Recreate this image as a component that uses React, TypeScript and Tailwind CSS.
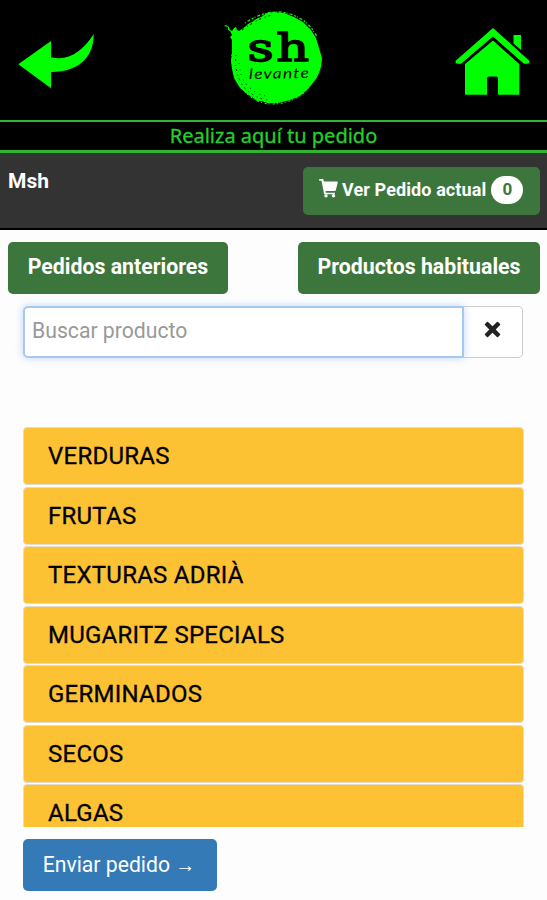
import React, { useState } from 'react';

const categories = [
  'VERDURAS',
  'FRUTAS',
  'TEXTURAS ADRIÀ',
  'MUGARITZ SPECIALS',
  'GERMINADOS',
  'SECOS',
  'ALGAS',
];

const BackArrow = () => (
  <svg viewBox="0 0 76 54" className="w-[76px] h-[54px]" fill="#00ff00">
    <path d="M0.3 30.300 33 7v16.200C50 27.500 64 18 75.700 0 76 25 58 38.500 33 38v16.200Z" />
  </svg>
);

const HomeIcon = () => (
  <svg viewBox="0 0 75 68" className="w-[75px] h-[68px]" fill="#00ff00">
    <path d="M38 0 74 32.500q1.500 3-2 3.200h-3L38 8.500 6 35.700H2.500Q-.6 35 1 32.500Z" />
    <path d="M58.500 7h7.500v15L58.500 15.500Z" />
    <path d="M38 12.500 64.300 36v30.800H43V50.500q0-2-2-2h-7q-2 0-2 2v16.300H10V36Z" />
  </svg>
);

const Logo = () => (
  <svg viewBox="0 0 102 96" className="w-[102px] h-[96px]">
    <path
      fill="#00ff00"
      d="M0 16l2-1 3 2 1 3 2 1 2-3 2-1 1 3 2 1 3-2 4-3 2-2 4-2 4-3 5-2 6-4 7-1 10 1 10 4 9 5 8 8 5 8 3 10 3 10-1 9-2 6-3 6-8 10-8 7-10 4-12 3-11 0-5-2-5 0-5-4-5-3-7-6-3-5-3-5-2-9-1-8 1-8 0-8 0-5-2-3 2-2-2-4-2-1 0-3-4-1Z"
    />
    {/* worn edge of the stamp */}
    <g fill="none" stroke="#00ff00" strokeWidth="1.200">
      <path strokeDasharray="1 2 3 2 2 1" d="M21 13Q36 3 50 2q14-1 27 7 10 6 16 18" />
      <path strokeDasharray="2 2 1 3" d="M9 36Q5 58 16 75q13 19 32 19 21 0 36-15" />
    </g>
    <g fill="none" stroke="#000" strokeWidth="1">
      <path strokeDasharray="1 3 2 4" d="M12 45Q10 62 19 76q10 12 25 14" />
      <path strokeDasharray="1 5 1 4" d="M15 53Q16 69 25 77t17 9" />
      <path strokeDasharray="2 4 1 3" d="M18 20Q36 7 49 5" />
    </g>
    <text
      x="23.500"
      y="51"
      textLength="64"
      lengthAdjust="spacingAndGlyphs"
      stroke="#000"
      strokeWidth="1.600"
      className="font-['DejaVu_Serif',serif] text-[40px] font-normal tracking-[2px]"
    >
      sh
    </text>
    <text
      x="25"
      y="69"
      textLength="61"
      lengthAdjust="spacingAndGlyphs"
      transform="rotate(-1 25 69)"
      className="font-['Lato',sans-serif] text-[14.500px] italic tracking-[1px]"
    >
      levante
    </text>
  </svg>
);

const CartIcon = () => (
  <svg viewBox="0 0 19 19" className="w-[19px] h-[19px] -mt-[3px]" fill="#fff">
    <path d="M.8 0h2.700q.8 0 1 .8L4.900 2.500h13.300q.8 0 .6.800l-2 8q-.2.700-1 .7H6.500l.4 1.700h9v1.500H6q-.8 0-1-.8L2.500 1.700H.8Q0 1.700 0 .9T.8 0Z" />
    <circle cx="7" cy="16.800" r="1.700" />
    <circle cx="14.500" cy="16.800" r="1.700" />
  </svg>
);

const RemoveIcon = () => (
  <svg viewBox="0 0 18 18" className="w-[17px] h-[17px]" fill="#222">
    <path d="M4.300 1 9 5.600 13.700 1q.6-.5 1.200 0L17 3.100q.5.600 0 1.200L12.400 9l4.600 4.700q.5.600 0 1.200L14.900 17q-.6.500-1.200 0L9 12.400 4.300 17q-.6.500-1.200 0L1 14.900q-.5-.6 0-1.200L5.600 9 1 4.300q-.5-.6 0-1.200L3.100 1q.6-.5 1.200 0Z" />
  </svg>
);

export default function App() {
  const [search, setSearch] = useState('');

  return (
    <div className="w-[547px] h-[900px] overflow-hidden bg-[#fdfdfd] font-['Roboto',sans-serif]">

      {/* HEADER */}
      <header className="flex h-[120px] justify-between bg-black pl-[18px] pr-[17px]">
        <button className="mt-[34px] self-start"><BackArrow /></button>
        <div className="mt-[10px] ml-[1px]"><Logo /></div>
        <button className="mt-[28px] self-start"><HomeIcon /></button>
      </header>

      <div className="h-[33px] border-t-2 border-b-[3px] border-[#31b431] bg-black text-center font-['Noto_Sans',sans-serif] text-[20px] leading-[28px] text-[#24d02b]">
        <span className="inline-block [-webkit-text-stroke:0.3px_#24d02b]">Realiza aquí tu pedido</span>
      </div>

      {/* CURRENT ORDER */}
      <div className="flex h-[77px] items-start justify-between border-b-2 border-black bg-[#333] pl-2 pr-[7px] pt-[14px]">
        <span className="text-[21px] font-bold leading-[28px] text-white">Msh</span>
        <button className="flex h-[48px] w-[237px] items-center rounded-[5px] bg-[#3c763d] pb-[2px] pl-4 text-[18px] font-bold text-white">
          <CartIcon />
          <span className="-mt-[1px] ml-1 whitespace-nowrap tracking-[0.1px]">Ver Pedido actual</span>
          <span className="ml-[5px] flex h-[28px] w-[32px] items-center justify-center rounded-full bg-white text-[17px] text-[#3c763d]">
            0
          </span>
        </button>
      </div>

      <div className="flex justify-between pl-2 pr-[7px] pt-3 text-[21.300px] font-bold text-white">
        <button className="h-[52px] w-[220px] rounded-[5px] bg-[#3c763d] pb-[2px]">Pedidos anteriores</button>
        <button className="h-[52px] w-[242px] rounded-[5px] bg-[#3c763d] pb-[2px]">Productos habituales</button>
      </div>

      {/* SEARCH */}
      <div className="mx-[23px] mt-3 flex h-[52px] w-[500px]">
        <input
          value={search}
          onChange={(e) => setSearch(e.target.value)}
          placeholder="Buscar producto"
          className="z-10 w-[441px] rounded-l-[5px] border-2 border-[#a5c9f0] bg-white px-[7px] pb-[2px] text-[21.200px] shadow-[0_0_8px_rgba(102,155,233,0.4)] outline-none placeholder:text-[#999]"
        />
        <button
          onClick={() => setSearch('')}
          className="flex w-[59px] items-center justify-center rounded-r-[5px] border border-l-0 border-[#ccc] bg-white pb-[6px] pr-[2px]"
        >
          <RemoveIcon />
        </button>
      </div>

      {/* CATEGORIES */}
      <div className="mx-[23px] mt-[69px] h-[400px] overflow-hidden">
        {categories.map((name) => (
          <div
            key={name}
            className="mb-[1.500px] flex h-[58px] items-center rounded-[4px] border border-[#e4dccb] bg-[#fdc233] pl-6 text-[24px] font-normal tracking-[0.250px] text-black [-webkit-text-stroke:0.3px_black]"
          >
            {name}
          </div>
        ))}
      </div>

      <button className="ml-[23px] mt-3 h-[52px] w-[194px] rounded-[5px] bg-[#337ab7] pr-[2px] text-[21.200px] text-white">
        Enviar pedido <span className="text-[20px]">→</span>
      </button>
    </div>
  );
}
